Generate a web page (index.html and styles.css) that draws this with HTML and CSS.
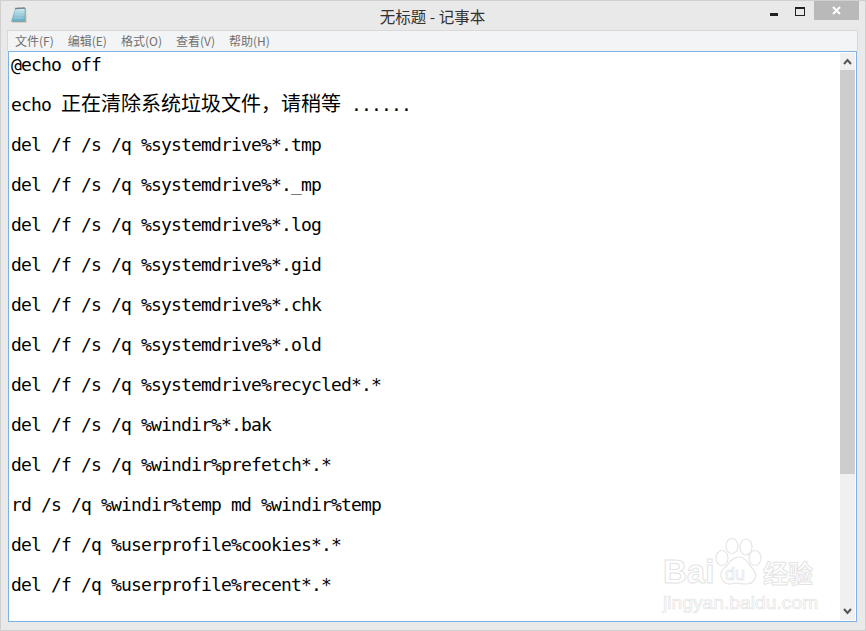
FILE: index.html
```html
<!DOCTYPE html>
<html lang="zh-CN">
<head>
<meta charset="utf-8">
<title>无标题 - 记事本</title>
<link rel="stylesheet" href="styles.css">
</head>
<body>
<div class="window">
  <header class="titlebar">
    <svg class="app-icon" width="16" height="16" viewBox="0 0 16 16">
      <defs><linearGradient id="pg" x1="0" y1="0" x2="0" y2="1"><stop offset="0" stop-color="#d8eef4"/><stop offset="1" stop-color="#5fa9c4"/></linearGradient></defs>
      <path d="M5 2 L15 1 L15.500 15.500 L1.500 15.500 Z" fill="#c9b48c"/>
      <path d="M4.500 1.500 L14 1 L14 14.500 L.5 14.500 Z" fill="url(#pg)" stroke="#6fa6ba" stroke-width=".6"/>
      <path d="M4.500 1.500 L14 1" stroke="#444" stroke-width="1.600" stroke-dasharray="1 1"/>
      <path d="M5 5h7M4.500 8h7.500M3.500 11h8.500" stroke="#a9d3e0" stroke-width=".8"/>
    </svg>
    <div class="title">无标题 - 记事本</div>
    <div class="controls">
      <div class="ctl"><span class="min"></span></div>
      <div class="ctl"><span class="max"></span></div>
      <div class="ctl close">
        <svg width="9" height="9" viewBox="0 0 9 9"><path d="M1 1l7 7M8 1l-7 7" stroke="#fff" stroke-width="2"/></svg>
      </div>
    </div>
  </header>
  <nav class="menubar">
    <span>文件(F)</span><span>编辑(E)</span><span>格式(O)</span><span>查看(V)</span><span>帮助(H)</span>
  </nav>
  <main class="editor">
    <div class="text">
      <p>@echo off</p>
      <p>echo <span class="cjk">正在清除系统垃圾文件，请稍等</span> ......</p>
      <p>del /f /s /q %systemdrive%*.tmp</p>
      <p>del /f /s /q %systemdrive%*._mp</p>
      <p>del /f /s /q %systemdrive%*.log</p>
      <p>del /f /s /q %systemdrive%*.gid</p>
      <p>del /f /s /q %systemdrive%*.chk</p>
      <p>del /f /s /q %systemdrive%*.old</p>
      <p>del /f /s /q %systemdrive%recycled*.*</p>
      <p>del /f /s /q %windir%*.bak</p>
      <p>del /f /s /q %windir%prefetch*.*</p>
      <p>rd /s /q %windir%temp md %windir%temp</p>
      <p>del /f /q %userprofile%cookies*.*</p>
      <p>del /f /q %userprofile%recent*.*</p>
    </div>
    <div class="scrollbar">
      <div class="arrow"><svg width="9" height="7" viewBox="0 0 9 7"><path d="M1 6l3.500-4 3.500 4" fill="none" stroke="#555" stroke-width="2"/></svg></div>
      <div class="thumb"></div>
      <div class="track"></div>
      <div class="arrow"><svg width="9" height="7" viewBox="0 0 9 7"><path d="M1 1l3.500 4 3.500-4" fill="none" stroke="#555" stroke-width="2"/></svg></div>
    </div>
    <div class="watermark">
      <div class="wm-top">
        <span class="wm-bai">Bai</span>
        <svg class="wm-paw" width="47" height="47" viewBox="0 0 47 47" fill="#fff" stroke="#e6e6e6" stroke-width="1.200"><ellipse cx="17" cy="8" rx="6" ry="7.500"/><ellipse cx="31" cy="9" rx="6" ry="8"/><ellipse cx="7" cy="20" rx="6" ry="7.500"/><ellipse cx="40" cy="20" rx="6" ry="7.500"/><path d="M24 19c7 0 9 7 14 12 6 7 1 15-7 15-5 0-10-2-15 0-8 1-13-8-8-15 6-4 8-12 16-12z"/></svg>
        <span class="wm-du">du</span>
        <span class="wm-cn">经验</span>
      </div>
      <div class="wm-url">jingyan.baidu.com</div>
    </div>
  </main>
</div>
</body>
</html>
```

FILE: styles.css
```css
* { box-sizing: border-box; }
html, body { margin: 0; height: 100%; }
body { background: #e9e9e9; overflow: hidden; }
.window {
  width: 866px; height: 631px;
  display: flex; flex-direction: column;
  background: #e9e9e9;
  border: 1px solid #d0d0d0;
  padding: 0 7px 8px 6px;
  font-family: "Noto Sans CJK SC", sans-serif;
}
.titlebar { height: 29px; flex: none; display: flex; align-items: center; position: relative; }
.app-icon { margin: -1px 0 0 4px; }
.title {
  position: absolute; left: 0; right: 0; top: 5px;
  text-align: center; font-size: 15.500px; line-height: 20px; color: #333;
}
.controls { margin-left: auto; display: flex; align-items: flex-start; align-self: flex-start; margin-right: -1px; }
.ctl { width: 26px; height: 19px; display: flex; align-items: center; justify-content: center; }
.min { width: 8px; height: 3px; background: #222; margin-top: 8px; }
.max { width: 10px; height: 9px; border: 1px solid #222; border-top-width: 2px; margin-top: 2px; }
.close { width: 45px; margin-left: 1px; background: #b9b9b9; }
.menubar {
  height: 21px; flex: none; display: flex; gap: 14px;
  background: #f3f4f6;
  border-top: 1px solid #d9d9d9; border-left: 1px solid #d9d9d9; border-right: 1px solid #d9d9d9;
  padding-left: 7px;
  font-size: 12px; line-height: 20px; color: #707070;
}
.editor {
  flex: 1; min-height: 0; display: flex; position: relative;
  background: #fff; border: 1px solid #7fb2e4;
  margin: 0 1px;
  overflow: hidden;
}
.text {
  flex: 1; padding: 3px 0 0 2px;
  font-family: "DejaVu Sans Mono", "Noto Sans CJK SC", monospace;
  font-size: 18px; letter-spacing: -.84px; line-height: 20px; color: #000;
}
.text p { margin: 0 0 20px; white-space: pre; height: 20px; }
.cjk { font-family: "Noto Sans CJK SC", sans-serif; font-size: 20px; letter-spacing: 0; line-height: 0; }
.scrollbar { width: 15px; flex: none; margin: 1px 1px 1px 0; display: flex; flex-direction: column; background: #f0f0f0; }
.arrow { height: 17px; flex: none; display: flex; align-items: center; justify-content: center; }
.thumb { height: 404px; flex: none; background: #cdcdcd; }
.track { flex: 1; }
.watermark {
  position: absolute; left: 654px; top: 486px; width: 165px;
  color: #fff; -webkit-text-stroke: 1px #e4e4e4;
  font-family: "Liberation Sans", sans-serif;
}
.wm-top { display: flex; align-items: flex-end; height: 49px; position: relative; }
.wm-bai { font-size: 33px; line-height: 30px; font-weight: 700; width: 52px; flex: none; }
.wm-paw { flex: none; margin-bottom: 2px; }
.wm-du { position: absolute; left: 62px; bottom: 3px; font-size: 18px; line-height: 20px; -webkit-text-stroke-width: .7px; }
.wm-cn { font-family: "Noto Sans CJK SC", sans-serif; font-size: 25px; line-height: 30px; font-weight: 700; margin-left: 1px; white-space: nowrap; }
.wm-url { font-size: 19.250px; line-height: 20px; margin-top: 6px; white-space: nowrap; -webkit-text-stroke-width: .7px; }
```
